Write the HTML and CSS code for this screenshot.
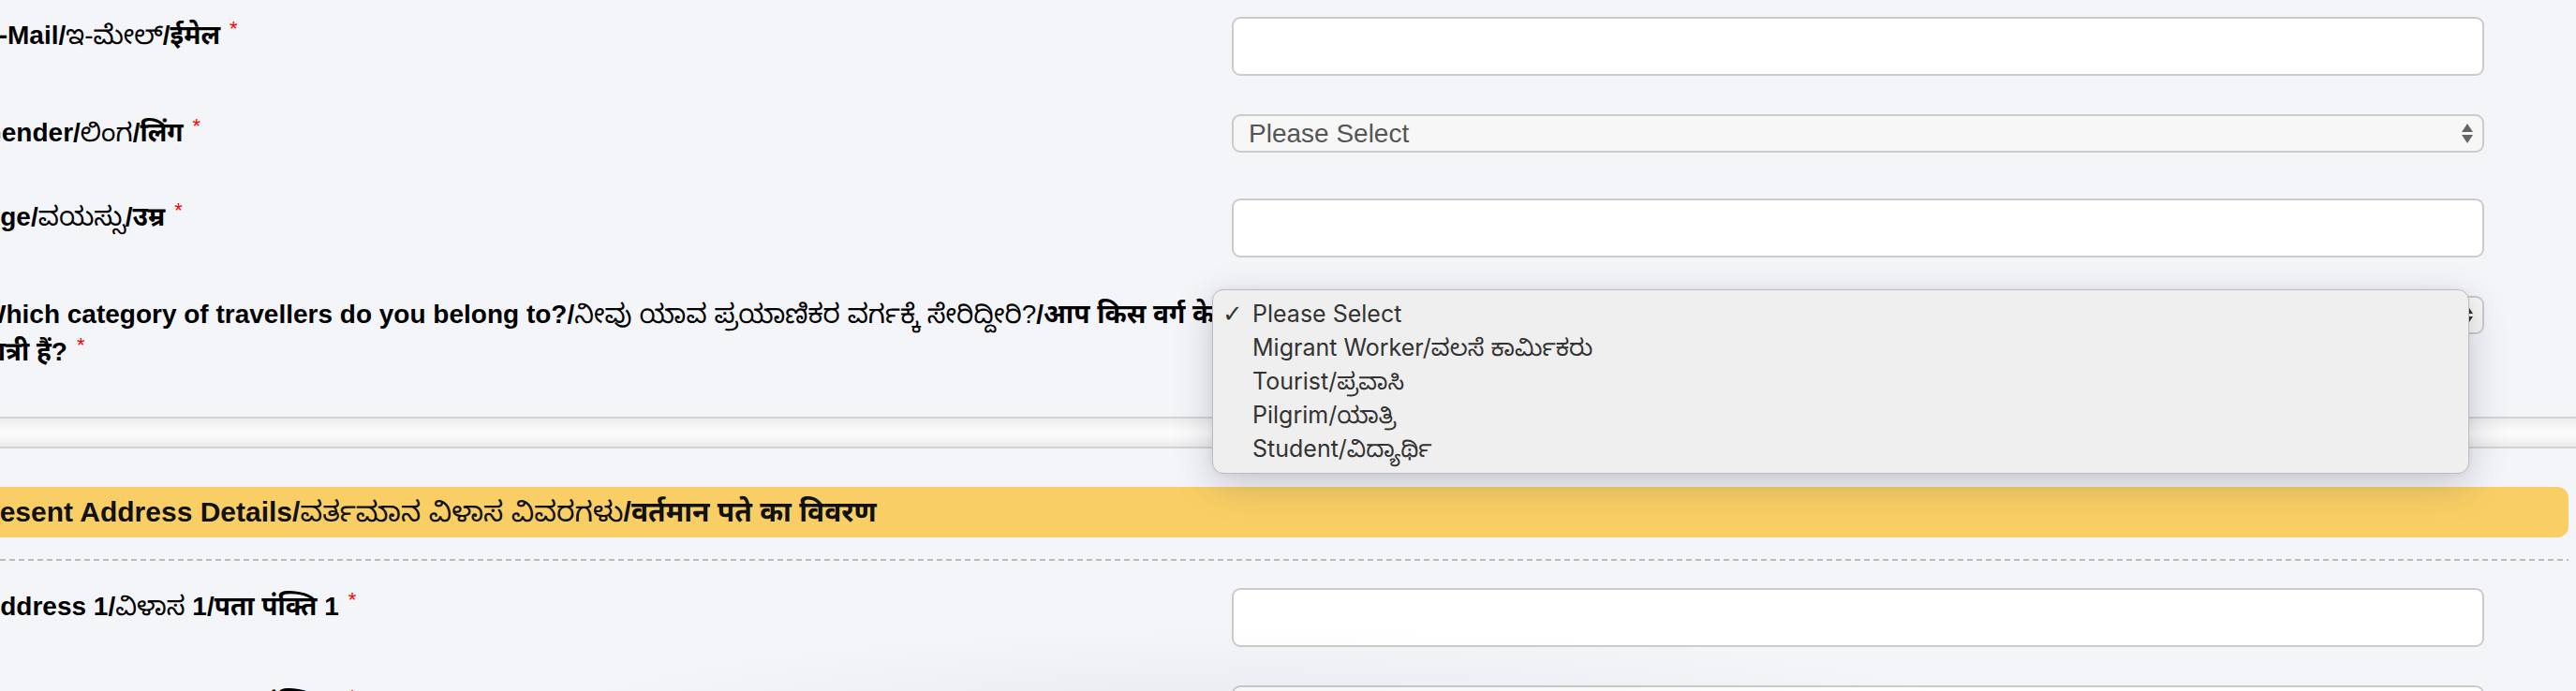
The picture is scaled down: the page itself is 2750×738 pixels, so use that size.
FILE: index.html
```html
<!DOCTYPE html>
<html lang="en">
<head>
<meta charset="utf-8">
<title>Traveller Registration</title>
<link rel="stylesheet" href="styles.css">
</head>
<body>
  <main class="form">
    <div class="field field-input">
      <label class="field-label">E-Mail/<span class="kn">ಇ-ಮೇಲ್</span>/ईमेल<span class="req">*</span></label>
      <div class="control"><input class="text-input" type="text"></div>
    </div>
    <div class="field field-select">
      <label class="field-label">Gender/<span class="kn">ಲಿಂಗ</span>/लिंग<span class="req">*</span></label>
      <div class="control">
        <div class="select"><span class="select-value">Please Select</span><span class="arrows"><i class="up"></i><i class="down"></i></span></div>
      </div>
    </div>
    <div class="field field-input">
      <label class="field-label">Age/<span class="kn">ವಯಸ್ಸು</span>/उम्र<span class="req">*</span></label>
      <div class="control"><input class="text-input" type="text"></div>
    </div>
    <div class="field field-last">
      <label class="field-label"><span class="line">Which category of travellers do you belong to?/<span class="kn">ನೀವು ಯಾವ ಪ್ರಯಾಣಿಕರ ವರ್ಗಕ್ಕೆ ಸೇರಿದ್ದೀರಿ?</span>/आप किस वर्ग के</span> यात्री हैं?<span class="req">*</span></label>
      <div class="control">
        <div class="select select-open"><span class="select-value">Please Select</span><span class="arrows"><i class="up"></i><i class="down"></i></span></div>
      </div>
    </div>
  </main>

  <div class="band"></div>

  <section class="form">
    <h4 class="section-title">Present Address Details/<span class="kn">ವರ್ತಮಾನ ವಿಳಾಸ ವಿವರಗಳು</span>/वर्तमान पते का विवरण</h4>
    <div class="dashed"></div>
    <div class="field field-input">
      <label class="field-label">Address 1/<span class="kn">ವಿಳಾಸ</span> 1/पता पंक्ति 1<span class="req">*</span></label>
      <div class="control"><input class="text-input" type="text"></div>
    </div>
    <div class="field field-input">
      <label class="field-label">Address 2/<span class="kn">ವಿಳಾಸ</span> 2/पता पंक्ति 2<span class="req">*</span></label>
      <div class="control"><input class="text-input" type="text"></div>
    </div>
  </section>

  <div class="toast-shadow"></div>

  <ul class="select-menu">
    <li class="menu-item checked"><span class="check">✓</span>Please Select</li>
    <li class="menu-item">Migrant Worker/ವಲಸೆ ಕಾರ್ಮಿಕರು</li>
    <li class="menu-item">Tourist/ಪ್ರವಾಸಿ</li>
    <li class="menu-item">Pilgrim/ಯಾತ್ರಿ</li>
    <li class="menu-item">Student/ವಿದ್ಯಾರ್ಥಿ</li>
  </ul>
</body>
</html>
```

FILE: styles.css
```css
html, body {
  margin: 0;
  padding: 0;
}

body {
  width: 2750px;
  height: 738px;
  overflow: hidden;
  background: #f4f5f9;
  font-family: "Liberation Sans", "Noto Sans Kannada", "Noto Sans Devanagari", "Noto Sans", sans-serif;
  color: #000;
  position: relative;
}

.form {
  margin-left: -20px;
  width: 2762px;
}

main.form {
  padding-top: 18px;
}

.field {
  display: grid;
  grid-template-columns: 1320px 1337px;
  column-gap: 15px;
  align-items: start;
}

.field-input {
  margin-bottom: 41px;
}

.field-select {
  margin-bottom: 49px;
}

.field-last {
  margin-bottom: 49px;
}

.field-label {
  font-weight: bold;
  font-size: 28px;
  line-height: 40px;
  color: #000;
}

.line {
  white-space: nowrap;
}

.kn {
  font-weight: normal;
}

.req {
  color: #f00;
  font-weight: normal;
  font-size: 22px;
  margin-left: 10px;
  vertical-align: 9px;
  line-height: 0;
}

.text-input {
  display: block;
  box-sizing: border-box;
  width: 100%;
  height: 63px;
  margin: 0;
  border: 2px solid #cbcbcb;
  border-radius: 9px;
  background: #fff;
  outline: none;
}

.select {
  box-sizing: border-box;
  height: 41px;
  border: 2px solid #cbcbcb;
  border-radius: 9px;
  background: #f7f7f7;
  display: flex;
  align-items: center;
  justify-content: space-between;
  padding: 0 10px 0 16px;
}

.select-value {
  font-size: 28px;
  color: #555;
  line-height: 1;
}

.arrows {
  display: flex;
  flex-direction: column;
  gap: 3px;
}

.arrows i {
  display: block;
  width: 0;
  height: 0;
  border-left: 6px solid transparent;
  border-right: 6px solid transparent;
}

.arrows .up {
  border-bottom: 9px solid #666;
}

.arrows .down {
  border-top: 9px solid #666;
}

.select-open .arrows .up {
  border-bottom-color: #2c2c2c;
}

.select-open .arrows .down {
  border-top-color: #2c2c2c;
}

.band {
  box-sizing: border-box;
  width: 2750px;
  height: 34px;
  border-top: 2px solid #d3d3d5;
  border-bottom: 2px solid #d3d3d5;
  background: linear-gradient(#ececee, #fbfbfb 45%, #fbfbfb 60%, #ececee);
}

.section-title {
  margin: 41px 0 0 -24px;
  padding: 0 0 0 12px;
  height: 54px;
  line-height: 54px;
  background: #f9cf65;
  border-radius: 0 12px 12px 0;
  font-size: 30px;
  font-weight: bold;
  color: #111;
  white-space: nowrap;
}

.dashed {
  margin-top: 23px;
  height: 2px;
  background: repeating-linear-gradient(90deg, #bcbcbc 0 6px, transparent 6px 10px);
  margin-bottom: 29px;
}

.toast-shadow {
  position: absolute;
  left: 500px;
  top: 660px;
  width: 1700px;
  height: 220px;
  background: radial-gradient(ellipse at center, rgba(30, 30, 60, 0.05), rgba(30, 30, 60, 0) 65%);
  pointer-events: none;
}

.select-menu {
  position: absolute;
  left: 1294px;
  top: 309px;
  box-sizing: border-box;
  width: 1342px;
  height: 197px;
  margin: 0;
  padding: 7px 0 0 0;
  list-style: none;
  background: #efefef;
  border: 1px solid #bdbdbd;
  border-radius: 12px;
  box-shadow: 0 12px 40px rgba(40, 40, 60, 0.22), 0 0 6px rgba(0, 0, 0, 0.06);
  font-family: Inter, "Noto Sans Kannada", "Noto Sans", sans-serif;
  font-size: 25px;
  line-height: 36px;
  color: #333;
}

.menu-item {
  position: relative;
  padding-left: 42px;
  white-space: nowrap;
}

.check {
  position: absolute;
  left: 10px;
  top: 0;
  font-family: "DejaVu Sans", sans-serif;
  font-size: 26px;
  font-weight: bold;
  color: #333;
}
```
